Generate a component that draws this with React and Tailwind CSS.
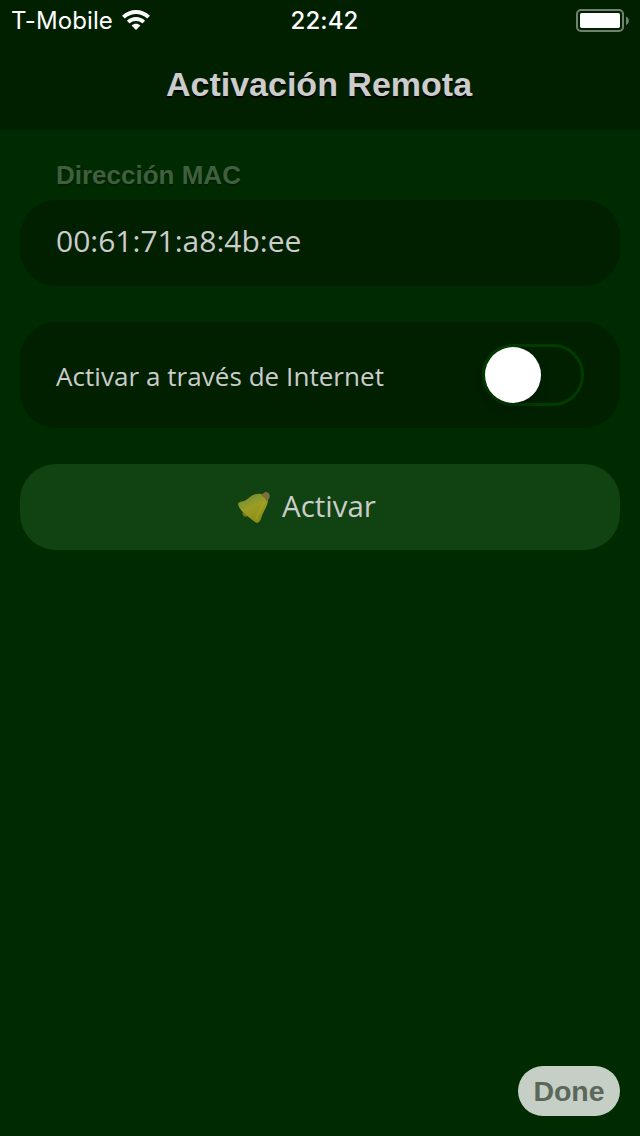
import { clsx } from 'clsx';

function WifiIcon() {
  return (
    <svg viewBox="0 0 28 20" className="mb-0.5 h-5 w-7 shrink-0" fill="#fff">
      <path d="M0 5.800C8 -1.800 20 -1.800 28 5.800L25.200 8.600C18.800 2.600 9.200 2.600 2.800 8.600Z" />
      <path d="M4.900 10.700C10.100 5.900 17.900 5.900 23.100 10.700L20.300 13.500C16.700 10.300 11.300 10.300 7.700 13.500Z" />
      <path d="M14 20L9.600 15.400C12.100 13.200 15.900 13.200 18.400 15.400Z" />
    </svg>
  );
}

function BatteryIcon() {
  return (
    <svg viewBox="0 0 54 24" className="h-6 w-[54px]">
      <rect x="1" y="1" width="46" height="21" rx="4" fill="none" stroke="#708370" strokeWidth="2" />
      <rect x="4" y="4" width="40" height="15" rx="1.8" fill="#fff" />
      <path d="M50 7.5C53.8 9 53.8 14.5 50 16Z" fill="#708370" />
    </svg>
  );
}

function BellIcon() {
  return (
    <svg viewBox="0 0 34 34" className="size-[34px] shrink-0">
      <defs>
        <linearGradient id="bell" x1="0.2" y1="0" x2="0.7" y2="1">
          <stop offset="0" stopColor="#68882f" />
          <stop offset="0.45" stopColor="#9b9d24" />
          <stop offset="1" stopColor="#8a8a14" />
        </linearGradient>
      </defs>
      <path d="M6 20Q4.500 25.500 7.500 26.500Q11 27.500 13 24Z" fill="#777711" />
      <path
        d="M1 14Q1.300 12 5 11.500C10.500 10.500 12.500 6 18 4.200C23 3 27 4 29.500 6.500Q31.800 9 30.500 13C29 18.500 26 22 24.500 27Q23 32.700 20 33Q17.500 32 15 29.800C11.500 27 8 24 5 21Q1.500 17.500 1 14Z"
        fill="url(#bell)"
      />
      <path d="M4 14.500C12 15 15 9 22 7" fill="none" stroke="#7f9a49" strokeWidth="2" opacity="0.6" />
      <path d="M27.500 12C24 18 21.500 23 19 29.500" fill="none" stroke="#aaa929" strokeWidth="2" opacity="0.5" />
      <path d="M24 5.500L27.500 2.300Q30 1.500 32 3.500Q33.500 5.800 32.300 8.200L30 11.500Q28 7.500 24 5.500Z" fill="#7c713c" />
    </svg>
  );
}

function Switch({ checked }) {
  return (
    <button
      role="switch"
      aria-checked={checked}
      aria-label="Activar a través de Internet"
      className={clsx(
        'flex h-[62px] w-[102px] items-center rounded-full border-[3px] border-[#003c00]',
        checked ? 'justify-end bg-[#003c00]' : 'justify-start'
      )}
    >
      <span className="size-14 rounded-full bg-white shadow-[0_5px_10px_rgba(0,0,0,0.25)]" />
    </button>
  );
}

function StatusBar() {
  return (
    <div className="grid h-10 grid-cols-3 items-center pl-[11px] pr-[10px] pt-px font-['Inter',sans-serif] text-white">
      <div className="flex items-center gap-[9px] whitespace-nowrap">
        <span className="pt-px text-[24px] leading-[38px] tracking-[0.1px]">T-Mobile</span>
        <WifiIcon />
      </div>
      <span className="pl-2 pt-px text-center text-[24px] font-medium leading-[38px] tracking-[0.1px]">22:42</span>
      <div className="flex justify-end">
        <BatteryIcon />
      </div>
    </div>
  );
}

export default function App() {
  return (
    <div className="flex h-[1136px] w-[640px] flex-col overflow-hidden bg-[#002a00] font-['Open_Sans',sans-serif] text-[#cccccc]">
      <header className="h-[130px] bg-[#002000]">
        <StatusBar />
        <h1 className="pr-0.5 pt-[18px] text-center font-['Liberation_Sans',sans-serif] text-[34px] font-bold leading-[52px] [text-shadow:0_2px_0_#000]">
          Activación Remota
        </h1>
      </header>

      <main className="flex flex-1 flex-col px-5 pt-7">
        <h2 className="h-[42px] pl-9 font-['Liberation_Sans',sans-serif] text-[26px] font-bold leading-[34px] text-[#3f5f3f] [text-shadow:0_2px_1px_rgba(0,0,0,0.25)]">
          Dirección MAC
        </h2>
        <div className="flex h-[86px] items-center rounded-[36px] bg-[#002000] px-9 pb-1 text-[30px]">
          <span className="leading-[80px]">00:61:71:a8:4b:ee</span>
        </div>

        <div className="mt-9 flex h-[106px] items-center justify-between rounded-[36px] bg-[#002000] px-9">
          <span className="pt-0.5 text-[26px] tracking-[0.05px]">Activar a través de Internet</span>
          <Switch checked={false} />
        </div>

        <button className="mt-9 flex h-[86px] items-center gap-[11px] rounded-[36px] bg-[#114211] pl-[217px]">
          <BellIcon />
          <span className="pb-0.5 text-[29.5px] leading-[82px]">Activar</span>
        </button>
      </main>

      <footer className="flex justify-end p-5">
        <button className="h-[50px] w-[102px] rounded-full bg-[#c5cfc5] pt-px font-['Liberation_Sans',sans-serif] text-[28.5px] font-bold leading-[47px] text-[#5b675b]">
          Done
        </button>
      </footer>
    </div>
  );
}
